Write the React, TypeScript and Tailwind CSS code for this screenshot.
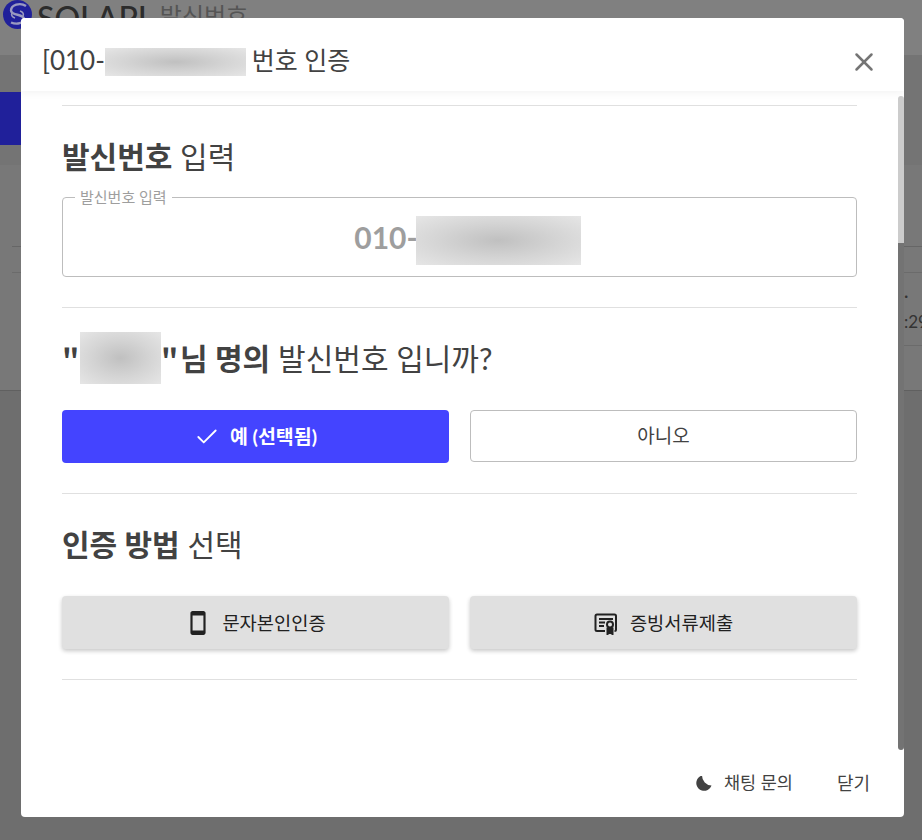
import React from "react";
import { X, Check } from "lucide-react";

const font = { fontFamily: '"Lato","Noto Sans CJK KR",sans-serif' };
const cjk = { fontFamily: '"Noto Sans CJK KR",sans-serif' };

function Blur({ className }: { className: string }) {
  return <span className={"inline-block bg-[radial-gradient(ellipse_at_center,#c0c0c0_0%,#d4d4d4_50%,#e6e6e6_100%)] " + className} />;
}

function Section({ children }: { children: React.ReactNode }) {
  return <section className="border-b border-[#e0e0e0] pb-[30px]">{children}</section>;
}

function PhoneIcon() {
  return (
    <svg width="26" height="26" viewBox="0 0 24 24" fill="#212121">
      <path d="M17 1.010L7 1c-1.100 0-2 .9-2 2v18c0 1.100.9 2 2 2h10c1.100 0 2-.9 2-2V3c0-1.100-.9-1.990-2-1.990zM17 19H7V5h10v14z" />
    </svg>
  );
}

function CertIcon() {
  return (
    <svg width="24" height="24" viewBox="0 0 24 24" fill="none" stroke="#212121" strokeWidth="2">
      <path d="M11 20H3a1.500 1.500 0 0 1-1.500-1.500V5A1.500 1.500 0 0 1 3 3.500h17.500A1.500 1.500 0 0 1 22 5v13.500a1.500 1.500 0 0 1-1.500 1.500" />
      <path d="M5 8h14M5 11.500h6M5 15h5" />
      <circle cx="16" cy="13.500" r="3" />
      <path d="M13.500 16.500V23l2.500-1.500L18.500 23v-6.500" fill="#212121" />
    </svg>
  );
}

export default function App() {
  return (
    <div className="relative h-[840px] w-[922px] overflow-hidden bg-[#6e6e6e]" style={font}>
      {/* dimmed page behind the dialog */}
      <div className="flex h-[55px] items-start gap-[5px] overflow-hidden bg-[#808080] pl-[3px]">
        <svg width="29" height="29" viewBox="0 0 29 29" className="shrink-0">
          <circle cx="14.500" cy="14.500" r="14.500" fill="#20209a" />
          <path d="M23 6C17 2 8 5 8 10.500c0 5.500 13 3 13 8.500 0 4-7 6-13 3.500" fill="none" stroke="#9a9ac0" strokeWidth="2.400" />
          <path d="M12 18c-3-1-4-3-3-5M17 11c3 1 4 3 3 5" fill="none" stroke="#9a9ac0" strokeWidth="1.600" />
        </svg>
        <span className="mt-[-2px] text-[32px] font-medium leading-[40px] text-[#2c2c2c]">SOLAPI</span>
        <span className="ml-[8px] mt-[-4px] text-[24px] leading-[40px] text-[#555555]">발신번호</span>
      </div>
      <div className="flex h-[110px] flex-col bg-[#747474] pt-[37px]">
        <div className="h-[53px] w-[21px] bg-[#20209a]" />
      </div>
      <div className="flex h-[225px] flex-col items-end bg-[#787878] pt-[81px]">
        <div className="w-[910px] border-b border-[#666666]" />
        <div className="h-[26px] w-[910px] border-b border-[#6b6b6b]" />
        <div className="h-[73px] w-[18px] whitespace-nowrap border-b border-[#6b6b6b] pt-[10px] text-[17px] leading-[26px] text-[#333333]">
          ·<br />:29
        </div>
      </div>
      <div className="border-t border-[#606060]" />

      {/* dialog */}
      <div className="absolute left-[21px] top-[18px] flex h-[799px] w-[883px] flex-col overflow-hidden rounded-[4px] bg-white">
        <header className="z-10 flex h-[73px] shrink-0 items-center justify-between bg-white pl-[21px] pr-[25px] pt-[14px] shadow-[0_2px_8px_rgba(0,0,0,0.05)]">
          <h2 className="-mt-[4px] flex items-center text-[26px] font-normal leading-[32px] text-[#424242]">
            [010-
            <Blur className="h-[28px] w-[141px] translate-y-[2px] bg-[linear-gradient(90deg,#dedede,#d0d0d0_60%,#bdbdbd_72%,#d6d6d6)]" />
            <span className="ml-[6px] text-[25px]">번호 인증</span>
          </h2>
          <X size={30} strokeWidth={2} className="text-[#757575]" />
        </header>

        <div className="relative flex-1">
          <div className="absolute right-0 top-[5px] h-[654px] w-[6px] overflow-hidden rounded-t-[3px]">
            <div className="h-[147px] bg-[#cccccc]" />
            <div className="h-[507px] rounded-b-[3px] bg-[#737373]" />
          </div>

          <div className="flex flex-col pl-[41px] pr-[47px] pt-[14px] text-[#424242]">
            <div className="border-t border-[#e0e0e0]" />
            <Section>
              <h3 className="mt-[30px] text-[30px] font-normal leading-[40px]">
                <b className="font-bold">발신번호</b> 입력
              </h3>
              <fieldset className="relative mt-[14px] h-[87px] rounded-[4px] border border-[#bdbdbd]">
                <legend className="ml-[12px] px-[5px] text-[15px] leading-[14px] text-[#9e9e9e]">발신번호 입력</legend>
                <div className="flex h-[72px] items-center justify-center pl-[16px] text-[30px] font-bold text-[#9e9e9e]">
                  <span className="-mr-[2px] -translate-y-[3px]">010-</span>
                  <Blur className="relative h-[49px] w-[165px] bg-[linear-gradient(180deg,#efefef,#dddddd_40%,#e8e8e8_80%,#f2f2f2)]" />
                </div>
              </fieldset>
            </Section>

            <Section>
              <h3 className="mt-[24px] flex h-[52px] items-center text-[30px] font-normal leading-[40px]">
                <b className="w-[18px] font-bold" style={cjk}>"</b>
                <Blur className="h-[52px] w-[81px]" />
                <b className="w-[19px] font-bold" style={cjk}>"</b>
                <b className="font-bold">님 명의</b>
                <span className="ml-[8px]">발신번호 입니까?</span>
              </h3>
              <div className="mt-[26px] grid grid-cols-2 gap-[21px]">
                <button className="flex h-[53px] items-center justify-center gap-[10px] rounded-[4px] bg-[#4444ff] text-[19.5px] font-bold text-white">
                  <Check size={26} strokeWidth={1.7} />
                  예 (선택됨)
                </button>
                <button className="h-[52px] rounded-[4px] border border-[#bdbdbd] bg-white text-[19px] text-[#424242]">아니오</button>
              </div>
            </Section>

            <Section>
              <h3 className="mt-[30px] text-[30px] font-normal leading-[40px]">
                <b className="font-bold">인증 방법</b> 선택
              </h3>
              <div className="mt-[32px] grid grid-cols-2 gap-[21px]">
                <button className="flex h-[53px] items-center justify-center gap-[11px] rounded-[4px] bg-[#e0e0e0] text-[18.7px] text-[#212121] shadow-[0_2px_4px_rgba(0,0,0,0.22)]">
                  <PhoneIcon />
                  <span className="translate-y-[1px]">문자본인인증</span>
                </button>
                <button className="flex h-[53px] items-center justify-center gap-[12px] rounded-[4px] bg-[#e0e0e0] text-[18.7px] text-[#212121] shadow-[0_2px_4px_rgba(0,0,0,0.22)]">
                  <CertIcon />
                  <span className="translate-y-[1px]">증빙서류제출</span>
                </button>
              </div>
            </Section>
          </div>
        </div>

        <footer className="flex h-[66px] shrink-0 items-start justify-end gap-[44px] pr-[34px] pt-[17px] text-[18px] leading-[30px] text-[#424242]">
          <span className="flex items-center gap-[12px]">
            <svg width="16" height="16" viewBox="0 0 16 16" fill="#424242">
              <path d="M6 0.500A7.800 7.800 0 1 0 15.500 10.500 10 10 0 0 1 6 0.500Z" />
            </svg>
            <span className="text-[17.500px]">채팅 문의</span>
          </span>
          <span>닫기</span>
        </footer>
      </div>
    </div>
  );
}
